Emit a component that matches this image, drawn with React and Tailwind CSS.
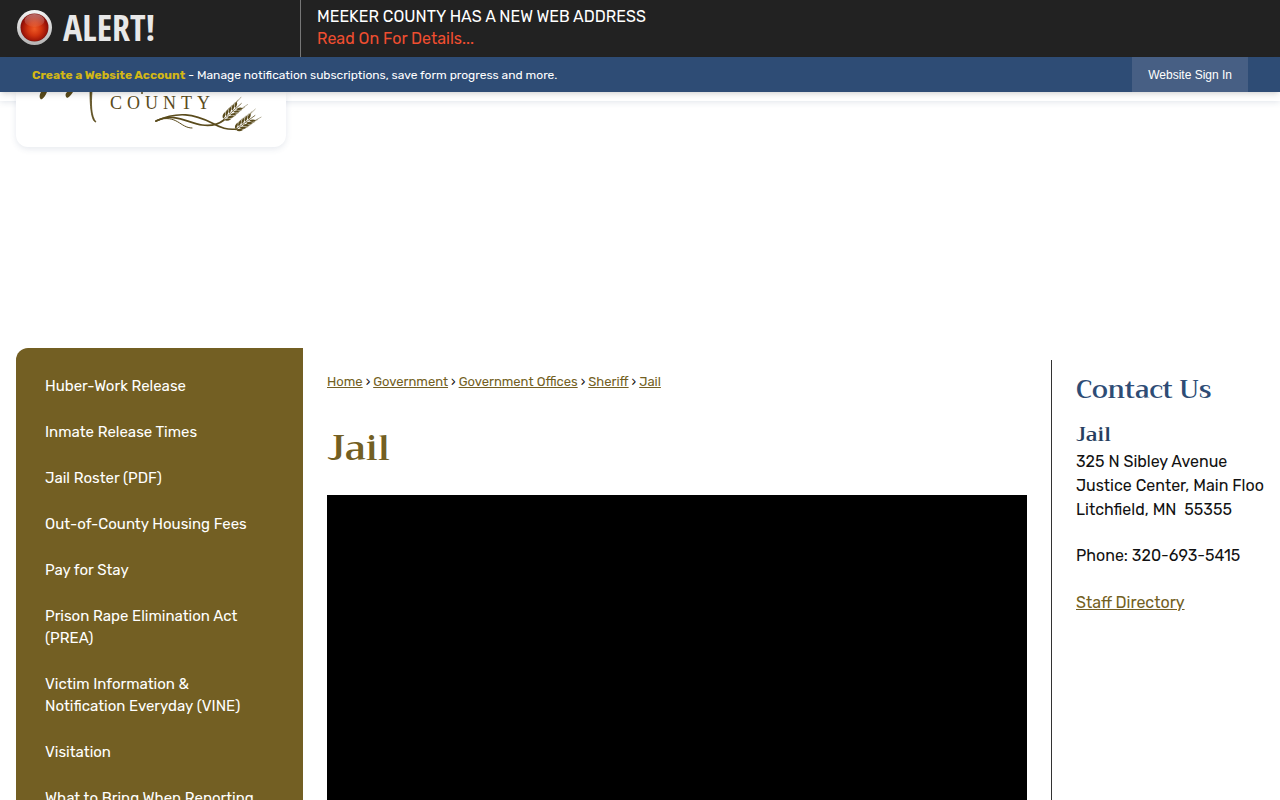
const menuItems = [
  "Huber-Work Release",
  "Inmate Release Times",
  "Jail Roster (PDF)",
  "Out-of-County Housing Fees",
  "Pay for Stay",
  "Prison Rape Elimination Act (PREA)",
  "Victim Information & Notification Everyday (VINE)",
  "Visitation",
  "What to Bring When Reporting",
];

const crumbs = ["Home", "Government", "Government Offices", "Sheriff", "Jail"];

const AlertLight = () => (
  <svg width="37" height="37" viewBox="0 0 37 37" className="shrink-0" aria-hidden="true">
    <defs>
      <linearGradient id="rim" x1="0" y1="0" x2="0" y2="1">
        <stop offset="0" stopColor="#f4f4f4" />
        <stop offset="1" stopColor="#b4b4b4" />
      </linearGradient>
      <radialGradient id="bulb" cx="0.5" cy="0.55" r="0.5">
        <stop offset="0" stopColor="#ee5a26" />
        <stop offset="0.5" stopColor="#d0330f" />
        <stop offset="1" stopColor="#900d06" />
      </radialGradient>
      <linearGradient id="shine" x1="0" y1="0" x2="0" y2="1">
        <stop offset="0" stopColor="#ffffff" stopOpacity="0.4" />
        <stop offset="1" stopColor="#ffffff" stopOpacity="0.05" />
      </linearGradient>
    </defs>
    <circle cx="18.5" cy="18.5" r="17.5" fill="url(#rim)" />
    <circle cx="18.5" cy="18.5" r="14" fill="#7d1a12" />
    <circle cx="18.5" cy="18.5" r="13.5" fill="url(#bulb)" />
    <ellipse cx="18.5" cy="11.5" rx="10" ry="6.5" fill="url(#shine)" />
  </svg>
);

const WheatHead = ({ transform }) => (
  <g transform={transform}>
    <path d="M0 0 L25 0" stroke="currentColor" strokeWidth="0.7" />
    {[1, 5, 9, 13, 17].map((x) => (
      <g key={x} fill="currentColor">
        <path d={`M${x} -0.7 q0.5 -3.6 5.5 -4 q-1 3.6 -5.5 4z`} />
        <path d={`M${x} 0.7 q0.5 3.6 5.5 4 q-1 -3.6 -5.5 -4z`} />
        <path
          d={`M${x + 5} -4 l7 -1 M${x + 5} 4 l7 1`}
          stroke="currentColor"
          strokeWidth="0.4"
        />
      </g>
    ))}
  </g>
);

const Logo = () => (
  <svg viewBox="0 0 270 55" className="w-full text-[#5a4b1c]" fill="none" role="img" aria-label="Meeker County">
    {/* lower strokes of the script initial */}
    <path d="M31 0 L25 0 Q22 5 25 7.5 Q28 7 31 0z M57 0 L51 0 Q48 3 51 6 Q54 5 57 0z" fill="currentColor" />
    <path d="M76 -1 C75 12 75 24 80 30 C76 30 74 18 74 -1z" fill="currentColor" stroke="currentColor" strokeWidth="0.8" />
    <path d="M126 0 v2" stroke="currentColor" strokeWidth="1.5" />
    <text x="94" y="17" fill="currentColor" className="font-['Liberation_Serif',serif] text-[18px] tracking-[5px]">
      COUNTY
    </text>
    {/* stems */}
    <g stroke="currentColor" strokeLinecap="round">
      <path d="M140 29 C162 19 178 22 196 31 C205 36 211 38 221 37" strokeWidth="1.7" />
      <path d="M140 29 C158 20 172 31 186 33 Q199 35 208 28" strokeWidth="1.7" />
      <path d="M142 28 C161 22 164 36 176 36" strokeWidth="1" />
    </g>
    <WheatHead transform="translate(207 28) rotate(-42)" />
    <WheatHead transform="translate(219 38) rotate(-36)" />
  </svg>
);

const AlertBar = () => (
  <div className="flex h-[57px] bg-[#222]">
    <div className="flex w-[301px] shrink-0 items-center gap-[10px] border-r border-[#777] pb-0.5 pl-4">
      <AlertLight />
      <strong className="font-['Open_Sans_Condensed','Liberation_Sans_Narrow','Open_Sans',sans-serif] text-[36px] leading-none text-[#e8e8e8]">
        ALERT!
      </strong>
    </div>
    <div className="flex flex-col justify-center px-4 pb-0.5 leading-[22px] text-white">
      <span>MEEKER COUNTY HAS A NEW WEB ADDRESS</span>
      <a href="#details" className="text-[#f04e30]">Read On For Details...</a>
    </div>
  </div>
);

const AccountBar = () => (
  <div className="flex h-[35px] items-stretch justify-between bg-[#2e4c75] px-8 text-xs text-white shadow-md">
    <p className="self-center">
      <a href="#account" className="font-bold text-[#d3b716]">Create a Website Account</a> - Manage notification
      subscriptions, save form progress and more.
    </p>
    <button className="bg-[#475f84] px-4 font-['Liberation_Sans',sans-serif]">Website Sign In</button>
  </div>
);

const SideNav = () => (
  <nav className="w-[23%] shrink-0 rounded-tl-xl bg-[#735f23] py-[15px]">
    <ul>
      {menuItems.map((item) => (
        <li key={item}>
          <a href="#page" className="block py-3 pl-[29px] pr-12 text-[15px] leading-[22px] text-white">
            {item}
          </a>
        </li>
      ))}
    </ul>
  </nav>
);

const Contact = () => (
  <aside className="mt-3 w-[213px] shrink-0 overflow-hidden border-l border-[#333] pl-6 pt-3 leading-6 text-[#111]">
    <h2 className="font-[Trirong,Taviraj,'Liberation_Serif',serif] text-[25px] font-semibold leading-9 text-[#2e4c75]">
      Contact Us
    </h2>
    <h3 className="mt-3 font-[Trirong,Taviraj,'Liberation_Serif',serif] text-[20px] font-semibold leading-[30px] text-[#263e60]">
      Jail
    </h3>
    <address className="whitespace-pre not-italic">
      <div>325 N Sibley Avenue</div>
      <div>Justice Center, Main Floor</div>
      <div>{"Litchfield, MN  55355"}</div>
    </address>
    <p className="mt-[22px]">Phone: 320-693-5415</p>
    <a href="#staff" className="mt-[23px] inline-block text-[#735f23] underline">Staff Directory</a>
  </aside>
);

export default function App() {
  return (
    <div className="min-h-screen bg-white font-[Rubik,Roboto,sans-serif]">
      <div className="sticky top-0 z-20">
        <AlertBar />
        <AccountBar />
      </div>

      <header className="relative z-10 h-[9px] bg-white shadow-[0_1px_6px_rgba(46,76,117,0.15)]">
        <a
          href="#home"
          className="absolute left-4 top-0 block w-[270px] rounded-b-xl bg-white shadow-[0_2px_6px_rgba(46,76,117,0.12)]"
        >
          <Logo />
        </a>
      </header>

      <div className="flex px-4 pt-[247px]">
        <SideNav />
        <main className="min-w-0 flex-1 px-6 pt-6">
          <ol className="flex flex-wrap gap-[3px] text-[13px] leading-5 text-[#111]">
            {crumbs.map((crumb, i) => (
              <li key={crumb} className="flex gap-[3px]">
                {i > 0 && <span>›</span>}
                <a href="#crumb" className="text-[#735f23] underline">{crumb}</a>
              </li>
            ))}
          </ol>
          <h1 className="mt-8 font-[Trirong,Taviraj,'Liberation_Serif',serif] text-[36px] font-semibold leading-[48px] text-[#735f23]">
            Jail
          </h1>
          <div className="mt-[23px] aspect-video bg-black" />
        </main>
        <Contact />
      </div>
    </div>
  );
}
